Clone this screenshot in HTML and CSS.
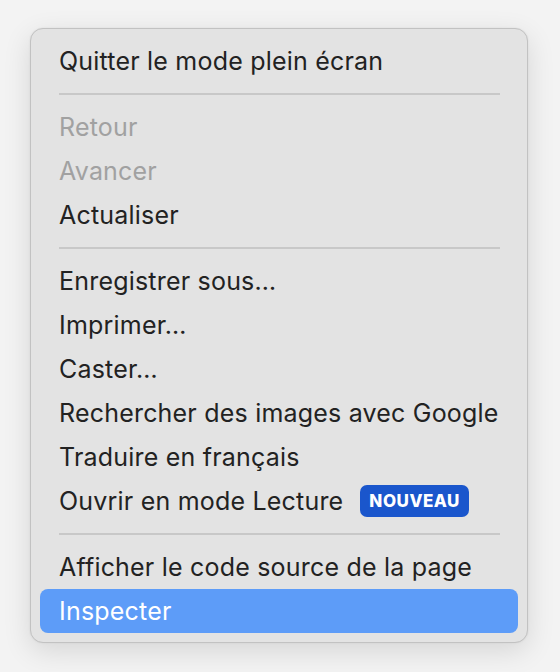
FILE: index.html
```html
<!DOCTYPE html>
<html lang="fr">
<head>
<meta charset="utf-8">
<title>Menu</title>
<link rel="stylesheet" href="styles.css">
</head>
<body>
<div class="menu">
  <div class="item">Quitter le mode plein écran</div>
  <div class="sep"></div>
  <div class="item disabled">Retour</div>
  <div class="item disabled">Avancer</div>
  <div class="item">Actualiser</div>
  <div class="sep"></div>
  <div class="item">Enregistrer sous…</div>
  <div class="item">Imprimer…</div>
  <div class="item">Caster…</div>
  <div class="item">Rechercher des images avec Google</div>
  <div class="item">Traduire en français</div>
  <div class="item">Ouvrir en mode Lecture <span class="badge">NOUVEAU</span></div>
  <div class="sep"></div>
  <div class="item">Afficher le code source de la page</div>
  <div class="item active">Inspecter</div>
</div>
</body>
</html>
```
FILE: styles.css
```css
html, body {
  margin: 0;
  padding: 0;
}
body {
  width: 560px;
  height: 672px;
  background: #f3f3f3;
  font-family: Inter, "Noto Sans", sans-serif;
  padding-top: 28px;
  padding-left: 30px;
  box-sizing: border-box;
}
.menu {
  width: 498px;
  box-sizing: border-box;
  background: #e3e3e3;
  border: 1px solid #c2c2c2;
  border-radius: 13px;
  padding: 10px 9px 9px 9px;
  box-shadow: 0 8px 28px rgba(0, 0, 0, 0.12), 0 0 2px rgba(0, 0, 0, 0.08);
  display: flex;
  flex-direction: column;
}
.item {
  height: 44px;
  display: flex;
  align-items: center;
  padding-left: 19px;
  font-size: 25px;
  color: #222222;
  border-radius: 8px;
  letter-spacing: 0.2px;
  white-space: nowrap;
}
.item.disabled {
  color: #a1a1a1;
}
.item.active {
  background: #5d9cf8;
  color: #ffffff;
}
.sep {
  height: 22px;
  display: flex;
  align-items: center;
  padding: 0 18px 0 19px;
}
.sep::before {
  content: "";
  flex: 1;
  height: 2px;
  background: #c8c8c8;
}
.badge {
  margin-left: 17px;
  background: #1a56cc;
  color: #ffffff;
  font-size: 17px;
  font-weight: 800;
  letter-spacing: 0.5px;
  height: 32px;
  padding: 0 9px;
  display: inline-flex;
  align-items: center;
  border-radius: 7px;
}
```
